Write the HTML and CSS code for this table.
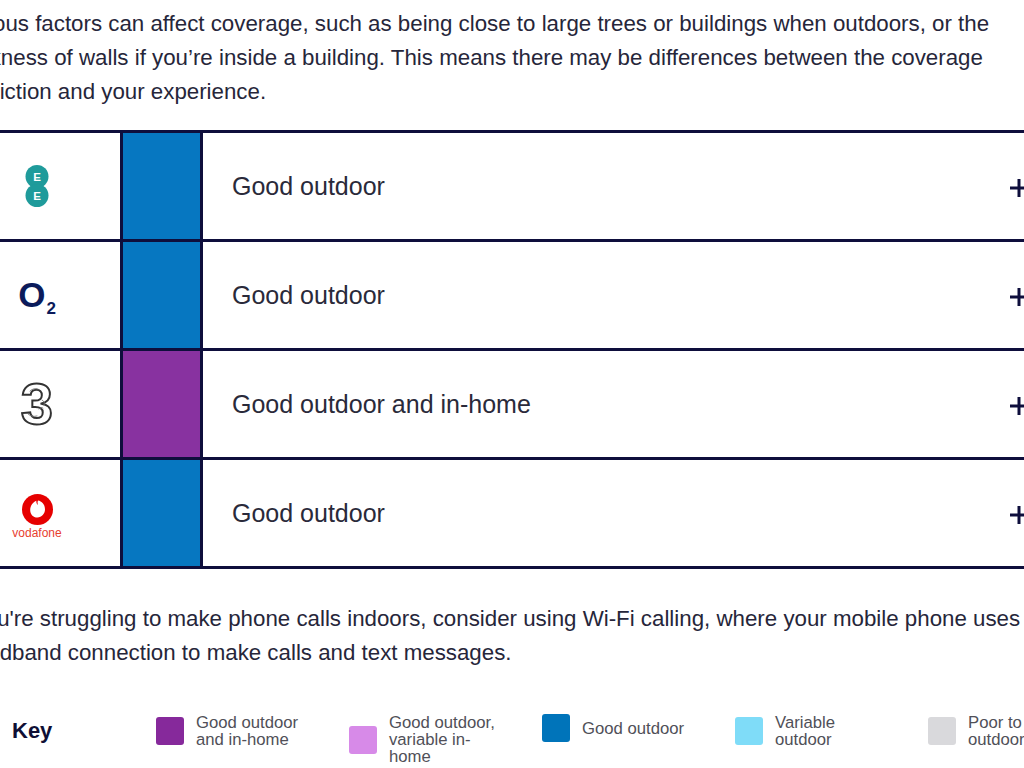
FILE: index.html
```html
<!DOCTYPE html>
<html lang="en">
<head>
<meta charset="utf-8">
<title>Coverage</title>
<link rel="stylesheet" href="styles.css">
</head>
<body>
<div class="page">
  <p class="intro">Various factors can affect coverage, such as being close to large trees or buildings when outdoors, or the thickness of walls if you’re inside a building. This means there may be differences between the coverage prediction and your experience.</p>

  <div class="coverage">
    <div class="row">
      <div class="logo">
        <svg class="ee" width="26" height="42" viewBox="0 0 26 42">
          <circle cx="13" cy="11.5" r="11.5" fill="#1f9b9b"/>
          <circle cx="13" cy="30.5" r="11.5" fill="#1f9b9b"/>
          <text x="13" y="15.6" text-anchor="middle" class="ee-letter">E</text>
          <text x="13" y="34.6" text-anchor="middle" class="ee-letter">E</text>
        </svg>
      </div>
      <div class="swatch blue"></div>
      <div class="label">Good outdoor</div>
      <div class="plus"><svg width="18" height="18" viewBox="0 0 18 18"><path d="M9 0V18M0 9H18" stroke="#0e0e3c" stroke-width="3"/></svg></div>
    </div>
    <div class="row">
      <div class="logo">
        <span class="o2">O<sub>2</sub></span>
      </div>
      <div class="swatch blue"></div>
      <div class="label">Good outdoor</div>
      <div class="plus"><svg width="18" height="18" viewBox="0 0 18 18"><path d="M9 0V18M0 9H18" stroke="#0e0e3c" stroke-width="3"/></svg></div>
    </div>
    <div class="row">
      <div class="logo">
        <svg class="three" width="44" height="52" viewBox="0 0 44 52">
          <text x="22" y="46" text-anchor="middle" class="three-digit">3</text>
          <path d="M15 13c2-2 5-3 8-2M27 22c2 1 3 3 2 5M13 36c2 2 6 3 9 2M24 31c1-1 3-2 4-1" fill="none" stroke="#777" stroke-width="0.9" stroke-linecap="round"/>
        </svg>
      </div>
      <div class="swatch purple"></div>
      <div class="label">Good outdoor and in-home</div>
      <div class="plus"><svg width="18" height="18" viewBox="0 0 18 18"><path d="M9 0V18M0 9H18" stroke="#0e0e3c" stroke-width="3"/></svg></div>
    </div>
    <div class="row">
      <div class="logo vodafone">
        <svg width="31" height="31" viewBox="0 0 31 31">
          <circle cx="15.5" cy="15.5" r="15.5" fill="#e60000"/>
          <path d="M16 6.5c3.6 0.6 7 3.6 7 8.8c0 4.6-3.4 8.2-7.6 8.2c-4.4 0-7.2-3.2-7.2-7.6c0-4.6 3.2-8 6.2-9.2c-0.3 1.6 0.2 3.6 1.6 4.4c-0.6-1.8-0.6-3.6 0-4.6z" fill="#fff"/>
        </svg>
        <span class="vf-name">vodafone</span>
      </div>
      <div class="swatch blue"></div>
      <div class="label">Good outdoor</div>
      <div class="plus"><svg width="18" height="18" viewBox="0 0 18 18"><path d="M9 0V18M0 9H18" stroke="#0e0e3c" stroke-width="3"/></svg></div>
    </div>
  </div>

  <p class="note">If you're struggling to make phone calls indoors, consider using Wi-Fi calling, where your mobile phone uses your broadband connection to make calls and text messages.</p>

  <div class="key">
    <div class="key-title">Key</div>
    <div class="key-item"><span class="chip c-purple"></span><span class="key-text">Good outdoor and in-home</span></div>
    <div class="key-item"><span class="chip c-lilac"></span><span class="key-text">Good outdoor, variable in-home</span></div>
    <div class="key-item"><span class="chip c-blue"></span><span class="key-text">Good outdoor</span></div>
    <div class="key-item"><span class="chip c-cyan"></span><span class="key-text">Variable outdoor</span></div>
    <div class="key-item"><span class="chip c-grey"></span><span class="key-text">Poor to no outdoor</span></div>
  </div>
</div>
</body>
</html>
```

FILE: styles.css
```css
html, body {
  margin: 0;
  padding: 0;
  background: #ffffff;
  overflow: hidden;
}

body {
  font-family: "Liberation Sans", Arial, sans-serif;
  color: #26263a;
}

.page {
  width: 1117px;
  margin-left: -45px;
}

.intro {
  margin: 7px 0 0 0;
  font-size: 22.3px;
  line-height: 34px;
}

.coverage {
  margin-top: 21px;
  border-bottom: 3px solid #0e0e3c;
}

.row {
  display: flex;
  height: 106px;
  border-top: 3px solid #0e0e3c;
}

.logo {
  width: 160px;
  padding-left: 2px;
  padding-right: 3px;
  border-right: 3px solid #0e0e3c;
  display: flex;
  flex-direction: column;
  align-items: center;
  justify-content: center;
  flex: none;
}

.ee-letter {
  font-family: "Liberation Sans", Arial, sans-serif;
  font-size: 11.5px;
  font-weight: bold;
  fill: #ffffff;
}

.o2 {
  font-family: "Liberation Sans", Arial, sans-serif;
  font-weight: bold;
  font-size: 35px;
  color: #0b1b5b;
  line-height: 1;
  margin-top: 4px;
}

.o2 sub {
  font-size: 17px;
  vertical-align: -7px;
  margin-left: 1px;
}

.three-digit {
  font-family: "Liberation Sans", Arial, sans-serif;
  font-weight: bold;
  font-size: 58px;
  fill: #ffffff;
  stroke: #333333;
  stroke-width: 2px;
}

.vodafone {
  gap: 2px;
  padding-top: 6px;
}

.vf-name {
  font-family: "Liberation Sans", Arial, sans-serif;
  font-size: 12px;
  color: #e8402f;
  line-height: 12px;
}

.swatch {
  width: 77px;
  flex: none;
  border-right: 3px solid #0e0e3c;
}

.blue { background: #0677c1; }
.purple { background: #8832a0; }

.label {
  flex: 1;
  display: flex;
  align-items: center;
  padding-left: 29px;
  font-size: 25px;
  color: #2a2a3a;
}

.plus {
  display: flex;
  align-items: center;
  padding-right: 44px;
  padding-top: 3px;
}

.plus svg { display: block; }

.note {
  margin: 33px 0 0 0;
  font-size: 22.3px;
  line-height: 34px;
}

.key {
  margin-top: 44px;
  display: grid;
  grid-template-columns: 201px repeat(5, 193px);
  align-items: start;
}

.key-title {
  padding-left: 57px;
  font-size: 22px;
  font-weight: bold;
  color: #0f0f35;
  line-height: 34px;
}

.key-item {
  display: flex;
  align-items: center;
  gap: 12px;
}

.chip {
  width: 28px;
  height: 28px;
  border-radius: 3px;
  flex: none;
}

.c-purple { background: #86299b; }
.c-lilac { background: #d78ae8; }
.c-blue { background: #0074ba; }
.c-cyan { background: #7fdcf8; }
.c-grey { background: #d9d9dc; }

.key-text {
  width: 115px;
  font-size: 16.7px;
  line-height: 17px;
  color: #505058;
}
```
